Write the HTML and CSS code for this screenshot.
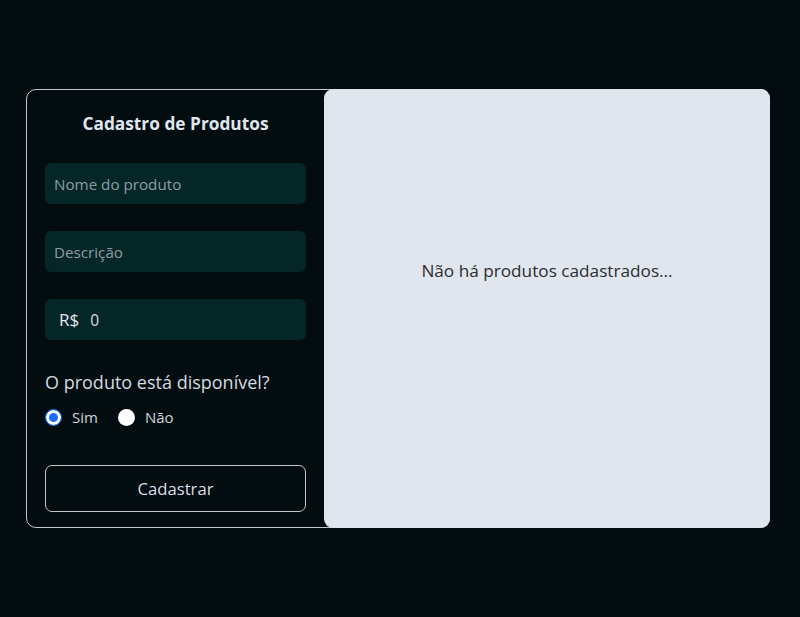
FILE: index.html
```html
<!DOCTYPE html>
<html lang="pt-BR">
<head>
<meta charset="utf-8">
<title>Cadastro de Produtos</title>
<link rel="stylesheet" href="styles.css">
</head>
<body>
<main class="card">
  <section class="form-panel">
    <h1 class="title">Cadastro de Produtos</h1>
    <form class="form">
      <input class="field" type="text" placeholder="Nome do produto">
      <input class="field" type="text" placeholder="Descrição">
      <label class="field price">
        <span class="currency">R$</span>
        <input class="price-input" type="text" value="0">
      </label>
      <p class="question">O produto está disponível?</p>
      <div class="radios">
        <label class="radio"><input type="radio" name="disp" checked><span>Sim</span></label>
        <label class="radio"><input type="radio" name="disp"><span>Não</span></label>
      </div>
      <button class="submit" type="button">Cadastrar</button>
    </form>
  </section>
  <section class="list-panel">
    <p class="empty">Não há produtos cadastrados...</p>
  </section>
</main>
</body>
</html>
```

FILE: styles.css
```css
* { box-sizing: border-box; }
html, body { margin: 0; padding: 0; }
body {
  background: #030c0e;
  width: 800px;
  height: 617px;
  font-family: "Open Sans", "Noto Sans", sans-serif;
  color: #d3dbe3;
  padding: 89px 30px 0 26px;
}
.card {
  display: flex;
  width: 744px;
  height: 439px;
  border: 1px solid #c3c8cd;
  border-radius: 10px;
}
.form-panel {
  width: 297px;
  flex: none;
  padding: 0 18px;
}
.title {
  margin: 22px 0 0;
  text-align: center;
  font-size: 17.3px;
  font-weight: 700;
  line-height: 24px;
  color: #dfe6ee;
}
.form {
  display: flex;
  flex-direction: column;
  margin-top: 27px;
}
.field {
  height: 41px;
  border: none;
  border-radius: 6px;
  background: #052627;
  color: #d3dbe3;
  font: 15.2px "Open Sans", "Noto Sans", sans-serif;
  padding: 0 9px;
  margin: 0 0 27px;
  outline: none;
}
.field::placeholder { color: #8d9da3; }
.price {
  display: flex;
  align-items: center;
  gap: 11px;
  padding-left: 14px;
  margin-bottom: 0;
}
.currency { font-size: 17px; color: #e1e7ee; }
.price-input {
  flex: 1;
  border: none;
  background: transparent;
  color: #d3dbe3;
  font: 15.5px "Open Sans", "Noto Sans", sans-serif;
  outline: none;
  padding: 0;
}
.question {
  margin: 30px 0 0;
  font-size: 18px;
  line-height: 24px;
}
.radios {
  display: flex;
  gap: 20px;
  margin-top: 11px;
  height: 24px;
  align-items: center;
}
.radio {
  display: flex;
  align-items: center;
  gap: 10px;
  font-size: 15px;
  color: #cfd7df;
}
.radio input {
  appearance: none;
  -webkit-appearance: none;
  width: 17px;
  height: 17px;
  margin: 0;
  border-radius: 50%;
  background: #fff;
  border: none;
}
.radio input:checked {
  background: #1a6ef0;
  box-shadow: inset 0 0 0 3px #fff;
  border: 1px solid #1a6ef0;
}
.submit {
  margin-top: 36px;
  height: 47px;
  border: 1px solid #c3c8cd;
  border-radius: 7px;
  background: transparent;
  color: #d8dfe6;
  font: 16.7px "Open Sans", "Noto Sans", sans-serif;
}
.list-panel {
  flex: 1;
  margin: -1px -1px -1px 0;
  background: #e1e5ed;
  border-radius: 9px;
  padding-top: 170px;
  display: flex;
  justify-content: center;
}
.empty {
  margin: 0;
  font-size: 17.2px;
  line-height: 24px;
  color: #2a2e33;
}
```
